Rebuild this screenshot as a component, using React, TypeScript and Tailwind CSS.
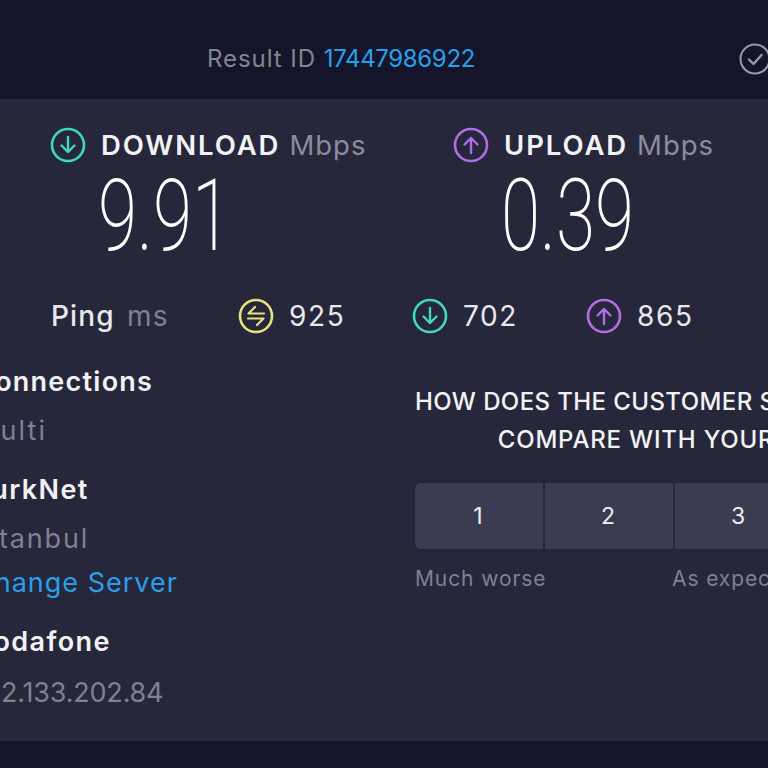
const sans = "font-['Inter','Open_Sans',sans-serif]";

function ArrowCircle({ dir, color }: { dir: "down" | "up"; color: string }) {
  return (
    <svg viewBox="0 0 36 36" fill="none" stroke={color} className="w-9 h-9 shrink-0">
      <circle cx="18" cy="18" r="16" strokeWidth="2.6" />
      {dir === "down" ? (
        <path d="M18 10v15M11.5 18.5 18 25l6.5-6.5" strokeWidth="2.4" strokeLinecap="round" strokeLinejoin="round" />
      ) : (
        <path d="M18 26V11M11.5 17.5 18 11l6.5 6.5" strokeWidth="2.4" strokeLinecap="round" strokeLinejoin="round" />
      )}
    </svg>
  );
}

function PingIcon() {
  return (
    <svg viewBox="0 0 36 36" fill="none" stroke="#e8e27a" className="w-9 h-9 shrink-0">
      <circle cx="18" cy="18" r="16" strokeWidth="2.6" />
      <path d="M26 15.5H10.5L17 9M10 20.5h15.5L19 27" strokeWidth="2.2" strokeLinecap="round" strokeLinejoin="round" />
    </svg>
  );
}

function SpeedBlock({ dir, color, label, value, width }: { dir: "down" | "up"; color: string; label: string; value: string; width: string }) {
  return (
    <div className={width}>
      <div className="flex items-center gap-[15px] h-9">
        <ArrowCircle dir={dir} color={color} />
        <span className="pt-[2px] text-[27.5px] font-semibold tracking-[1.9px] text-[#f2f2f5]">{label}</span>
        <span className="pt-[2px] text-[27.5px] tracking-[1px] text-[#8b8c9c] -ml-[6px]">Mbps</span>
      </div>
      <div className="ml-[48px] mt-[11px] h-[76px] origin-left scale-x-[0.71] font-['Roboto'] font-extralight text-[100px] leading-[84px] text-white">
        {value}
      </div>
    </div>
  );
}

function InfoRow({ text, className }: { text: string; className: string }) {
  return <div className={`text-[27px] leading-[32px] whitespace-nowrap ${className}`}>{text}</div>;
}

export default function App() {
  return (
    <div className={`w-[768px] h-[768px] overflow-hidden flex flex-col bg-[#14152a] ${sans}`}>
      <header className="h-[99px] shrink-0 flex items-center justify-between pl-[207px] pt-[18px]">
        <div className="text-[24px] whitespace-nowrap">
          <span className="tracking-[0.95px] text-[#84858f]">Result ID </span>
          <span className="tracking-[-0.35px] text-[#2a9fe8]">17447986922</span>
        </div>
        <svg viewBox="0 0 32 32" fill="none" stroke="#9a9ba6" className="w-8 h-8 shrink-0 -mr-[3px]">
          <circle cx="16" cy="16" r="14.5" strokeWidth="2" />
          <path d="M10 16.5l4.5 4.5 8-9" strokeWidth="2.4" strokeLinecap="round" strokeLinejoin="round" />
        </svg>
      </header>

      <main className="h-[642px] shrink-0 bg-[#26273a] pt-[28px] overflow-hidden">
        <div className="flex pl-[50px]">
          <SpeedBlock dir="down" color="#3ed8c3" label="DOWNLOAD" value="9.91" width="w-[403px] shrink-0" />
          <SpeedBlock dir="up" color="#b06ee6" label="UPLOAD" value="0.39" width="w-[315px] shrink-0" />
        </div>

        <div className="flex items-center h-9 mt-[48px] pl-[51px] text-[28px] tracking-[1.6px] text-[#e8e8ee]">
          <span className="w-[76px] font-medium tracking-[1.1px]">Ping</span>
          <span className="w-[111px] tracking-[1.1px] text-[#7f8092]">ms</span>
          <PingIcon />
          <span className="w-[123px] ml-[15px]">925</span>
          <ArrowCircle dir="down" color="#3ed8c3" />
          <span className="w-[123px] ml-[15px]">702</span>
          <ArrowCircle dir="up" color="#b06ee6" />
          <span className="ml-[15px]">865</span>
        </div>

        <div className="flex mt-[32px]">
          <div className="w-[415px] shrink-0 -ml-[26px] mr-[26px]">
            <InfoRow text="Connections" className="font-semibold tracking-[1.25px] text-[#f2f2f5]" />
            <InfoRow text="Multi" className="mt-[17px] tracking-[2.1px] text-[#7f8092]" />
            <InfoRow text="TurkNet" className="mt-[27px] font-semibold tracking-[1.4px] text-[#f2f2f5]" />
            <InfoRow text="Istanbul" className="mt-[17px] tracking-[1.8px] text-[#7f8092]" />
            <InfoRow text="Change Server" className="mt-[12px] tracking-[1px] text-[#2a9fe8]" />
            <InfoRow text="Vodafone" className="mt-[27px] font-semibold tracking-[1.4px] text-[#f2f2f5]" />
            <InfoRow text="212.133.202.84" className="mt-[19px] tracking-[-0.2px] text-[#7f8092]" />
          </div>

          <div className="w-[654px] shrink-0 pt-[17px]">
            <div className="w-[654px] text-center text-[24px] leading-[38px] font-medium text-[#f2f2f5] whitespace-nowrap">
              <div className="tracking-[0.4px]">HOW DOES THE CUSTOMER SERVICE FROM VODAFONE</div>
              <div className="tracking-[0.8px]">COMPARE WITH YOUR EXPECTATIONS?</div>
            </div>
            <div className="flex gap-[2px] mt-[24px] w-[658px]">
              {[1, 2, 3, 4, 5].map((n) => (
                <div key={n} className="w-[128px] h-[66px] shrink-0 first:rounded-l-md last:rounded-r-md bg-[#3b3c51] flex items-center justify-center pr-[2px] text-[23px] text-[#eeeef2]">
                  {n}
                </div>
              ))}
            </div>
            <div className="flex mt-[14px] text-[21px] tracking-[0.9px] text-[#7f8092] whitespace-nowrap">
              <span className="w-[257px]">Much worse</span>
              <span>As expected</span>
            </div>
          </div>
        </div>
      </main>

      <footer className="flex-1 bg-[#14152a]" />
    </div>
  );
}
